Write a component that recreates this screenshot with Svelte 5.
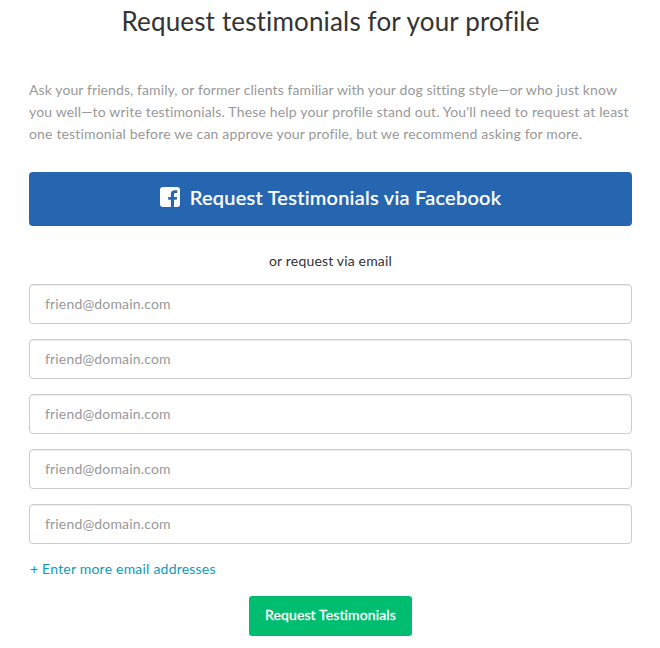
<script lang="ts">
  const placeholder = "friend@domain.com";

  let emails = $state(["", "", "", "", ""]);

  function addEmail() {
    emails.push("");
  }
</script>

<main class="testimonials">
  <h1>Request testimonials for your profile</h1>

  <p class="intro">
    <span class="first">Ask your friends, family, or former clients familiar with your dog sitting style—or who just know</span><br />
    <span>you well—to write testimonials. These help your profile stand out. You'll need to request at least</span><br />
    <span>one testimonial before we can approve your profile, but we recommend asking for more.</span>
  </p>

  <button class="facebook" type="button">
    <svg viewBox="0 0 20 20" width="20" height="20" aria-hidden="true">
      <path
        fill="#fff"
        d="M3 0h14a3 3 0 0 1 3 3v14a3 3 0 0 1-3 3h-3v-7.200h2.700l.4-2.900H14V7.600c0-1 .5-1.600 1.600-1.600h1.700V3.200h-2.600c-2.500 0-3.800 1.500-3.800 3.900v2.800H8.200v2.900h2.700V20H3a3 3 0 0 1-3-3V3a3 3 0 0 1 3-3z"
      />
    </svg>
    <span>Request Testimonials via Facebook</span>
  </button>

  <p class="or">or request via email</p>

  <form class="emails" onsubmit={(evt) => evt.preventDefault()}>
    {#each emails as _, i}
      <input type="email" {placeholder} aria-label="Email {i + 1}" bind:value={emails[i]} />
    {/each}
    <button class="more" type="button" onclick={addEmail}>+ Enter more email addresses</button>
    <button class="submit" type="submit">Request Testimonials</button>
  </form>
</main>

<style>
  :global(body) {
    background: #fff;
  }

  .testimonials {
    box-sizing: border-box;
    height: 648px;
    padding: 4px 28px 0 29px;
    color: #333;
    font-family: Lato, "Liberation Sans", sans-serif;
    font-size: 14px;
    line-height: 22px;
    letter-spacing: 0.17px;
  }

  h1 {
    margin: 0;
    font-size: 26px;
    font-weight: 400;
    line-height: 34px;
    letter-spacing: 0.16px;
    text-align: center;
    white-space: nowrap;
  }

  .intro {
    margin: 41px 0 0;
    color: #999;
    white-space: nowrap;
  }

  .first {
    letter-spacing: 0.1px;
  }

  button,
  input {
    font: inherit;
    letter-spacing: inherit;
  }

  button {
    border: none;
    padding: 0;
    cursor: pointer;
  }

  .facebook {
    display: flex;
    align-items: center;
    justify-content: center;
    gap: 10px;
    width: 100%;
    height: 54px;
    margin-top: 27px;
    padding-bottom: 4px;
    border-radius: 4px;
    background: #2665af;
    color: #fff;
    font-size: 20px;
    font-weight: 500;
    letter-spacing: 0.25px;
    -webkit-text-stroke: 0.2px #fff;
  }

  .or {
    margin: 24px 0 12px;
    text-align: center;
  }

  .emails {
    display: flex;
    flex-direction: column;
    gap: 15px;
  }

  input {
    box-sizing: border-box;
    width: 100%;
    height: 40px;
    padding: 0 15px 2px;
    border: 1px solid #ccc;
    border-radius: 4px;
    background: #fff;
    color: #333;
    box-shadow: inset 0 1px 1px rgba(0, 0, 0, 0.075);
    outline: none;
  }

  input::placeholder {
    color: #999;
    opacity: 1;
  }

  .more {
    align-self: flex-start;
    height: 22px;
    padding: 0 0 0 1px;
    margin: -1px 0 1px;
    background: none;
    color: #0f9bb4;
    letter-spacing: 0.21px;
  }

  .submit {
    align-self: center;
    width: 163px;
    height: 40px;
    padding-bottom: 2px;
    border-radius: 3px;
    background: #00bd70;
    color: #fff;
    letter-spacing: 0.13px;
    -webkit-text-stroke: 0.3px #fff;
  }
</style>
